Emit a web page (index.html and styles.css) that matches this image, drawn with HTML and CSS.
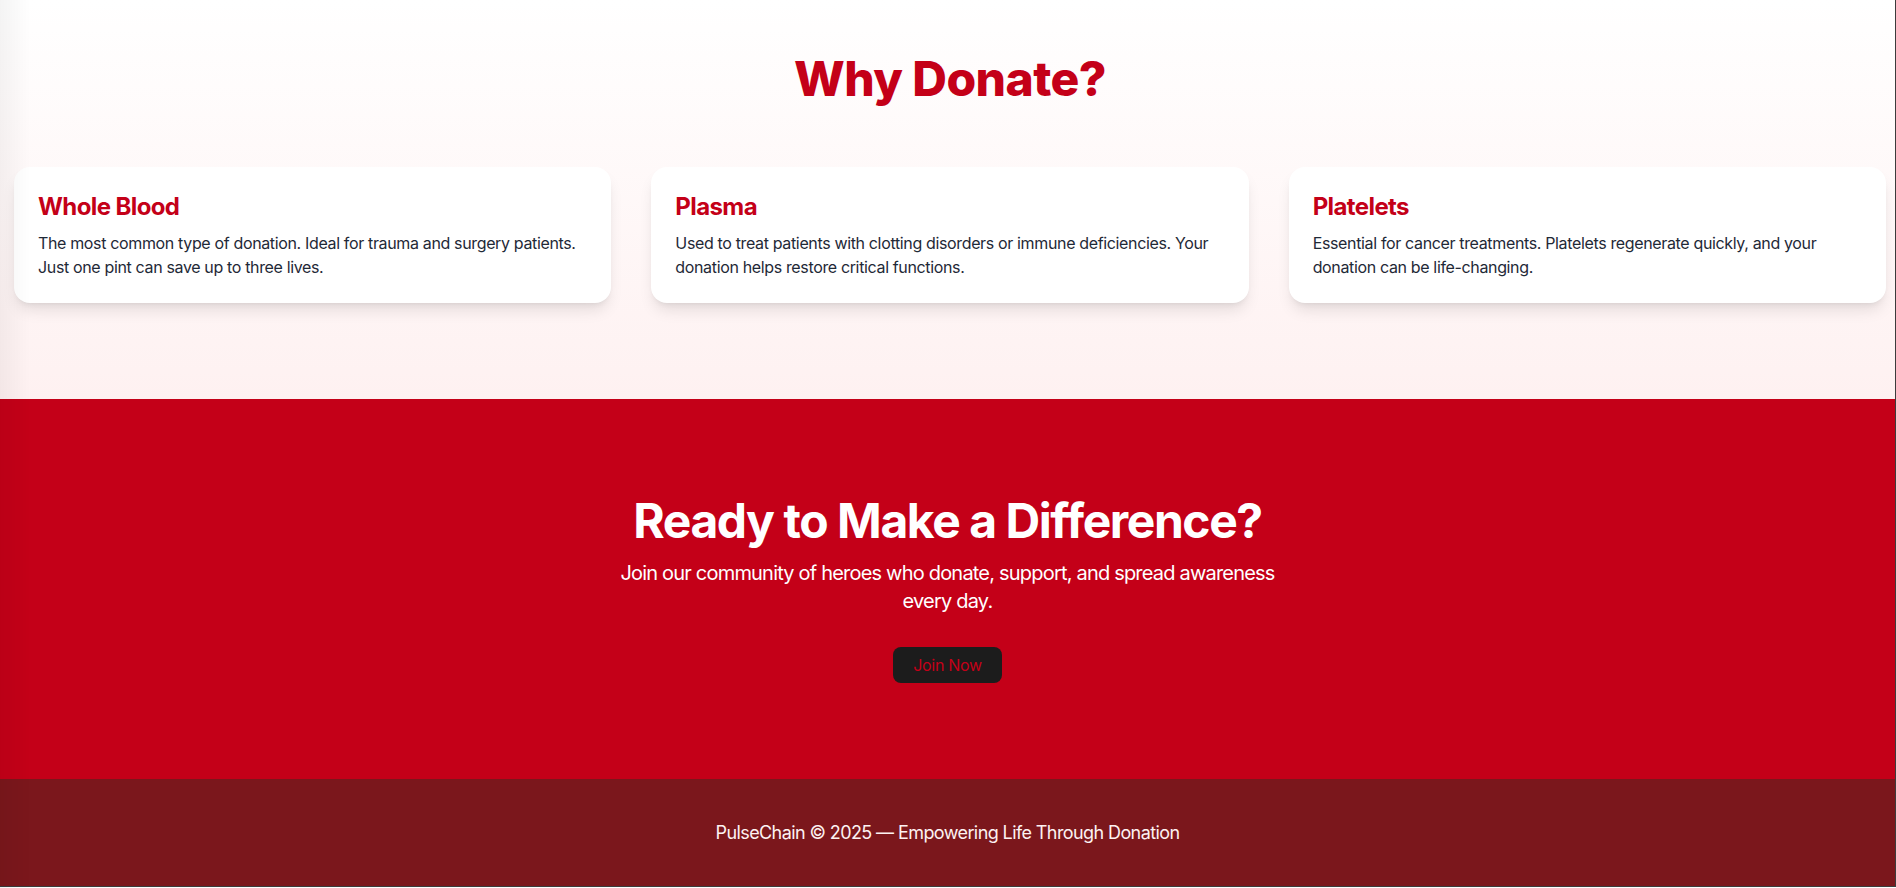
FILE: index.html
```html
<!DOCTYPE html>
<html lang="en">
<head>
<meta charset="utf-8">
<title>PulseChain — Why Donate?</title>
<link rel="stylesheet" href="styles.css">
</head>
<body>
<div class="page">
  <section class="why">
    <h2 class="why-title">Why Donate?</h2>
    <div class="cards">
      <article class="card">
        <h3 class="card-title">Whole Blood</h3>
        <p class="card-text">The most common type of donation. Ideal for trauma and surgery patients. Just one pint can save up to three lives.</p>
      </article>
      <article class="card">
        <h3 class="card-title">Plasma</h3>
        <p class="card-text">Used to treat patients with clotting disorders or immune deficiencies. Your donation helps restore critical functions.</p>
      </article>
      <article class="card">
        <h3 class="card-title">Platelets</h3>
        <p class="card-text">Essential for cancer treatments. Platelets regenerate quickly, and your donation can be life-changing.</p>
      </article>
    </div>
  </section>
  <section class="cta">
    <h2 class="cta-title">Ready to Make a Difference?</h2>
    <p class="cta-text">Join our community of heroes who donate, support, and spread awareness every day.</p>
    <a class="cta-btn" href="#">Join Now</a>
  </section>
  <footer class="footer">
    <p>PulseChain © 2025 — Empowering Life Through Donation</p>
  </footer>
</div>
<div class="edge-shade"></div>
</body>
</html>
```
FILE: styles.css
```css
* { box-sizing: border-box; }
html, body { margin: 0; padding: 0; }
body {
  font-family: Inter, "Noto Sans", "Liberation Sans", sans-serif;
  color: #1f2937;
  background: #fff;
}
.page {
  width: 1896px;
  border-right: 1px solid #3c3c3c;
  border-bottom: 1px solid #3c3c3c;
}
.why {
  background: linear-gradient(to bottom, #ffffff, #fef1f1);
  padding: 55px 9px 96px 14px;
  height: 399px;
}
.why-title {
  margin: 0 0 64px;
  text-align: center;
  font-size: 48px;
  line-height: 48px;
  font-weight: 800;
  letter-spacing: -0.012em;
  color: #c40018;
}
.cards {
  display: grid;
  grid-template-columns: repeat(3, 1fr);
  gap: 40px;
}
.card {
  background: #fff;
  border-radius: 16px;
  padding: 24px;
  box-shadow: 0 10px 15px -3px rgba(0,0,0,0.1), 0 4px 6px -4px rgba(0,0,0,0.1);
}
.card-title {
  margin: 0 0 8px;
  font-size: 24px;
  line-height: 32px;
  font-weight: 700;
  letter-spacing: -0.025em;
  color: #c40018;
}
.card-text {
  margin: 0;
  font-size: 16px;
  line-height: 24px;
  letter-spacing: -0.022em;
  color: #1f2937;
}
.cta {
  background: #c40018;
  color: #fff;
  text-align: center;
  padding: 96px 0;
  display: flex;
  flex-direction: column;
  align-items: center;
}
.cta-title {
  margin: 2px 0 14px;
  font-size: 48px;
  line-height: 48px;
  font-weight: 700;
  letter-spacing: -0.03em;
}
.cta-text {
  margin: 0 0 32px;
  max-width: 672px;
  font-size: 20px;
  line-height: 28px;
  letter-spacing: -0.04em;
}
.cta-btn {
  display: inline-block;
  background: #1c1c1c;
  color: #c40018;
  text-decoration: none;
  font-size: 16px;
  line-height: 24px;
  letter-spacing: -0.02em;
  padding: 6px 20px;
  border-radius: 8px;
}
.footer {
  background: #7b171c;
  color: #fdf2f2;
  text-align: center;
  padding: 42px 0 41px;
}
.footer p {
  margin: 0;
  font-size: 18px;
  line-height: 24px;
  letter-spacing: -0.033em;
}
.edge-shade {
  position: fixed;
  left: 0;
  top: 0;
  bottom: 0;
  width: 30px;
  background: linear-gradient(to right, rgba(0,0,0,0.045), rgba(0,0,0,0));
  pointer-events: none;
}
```
